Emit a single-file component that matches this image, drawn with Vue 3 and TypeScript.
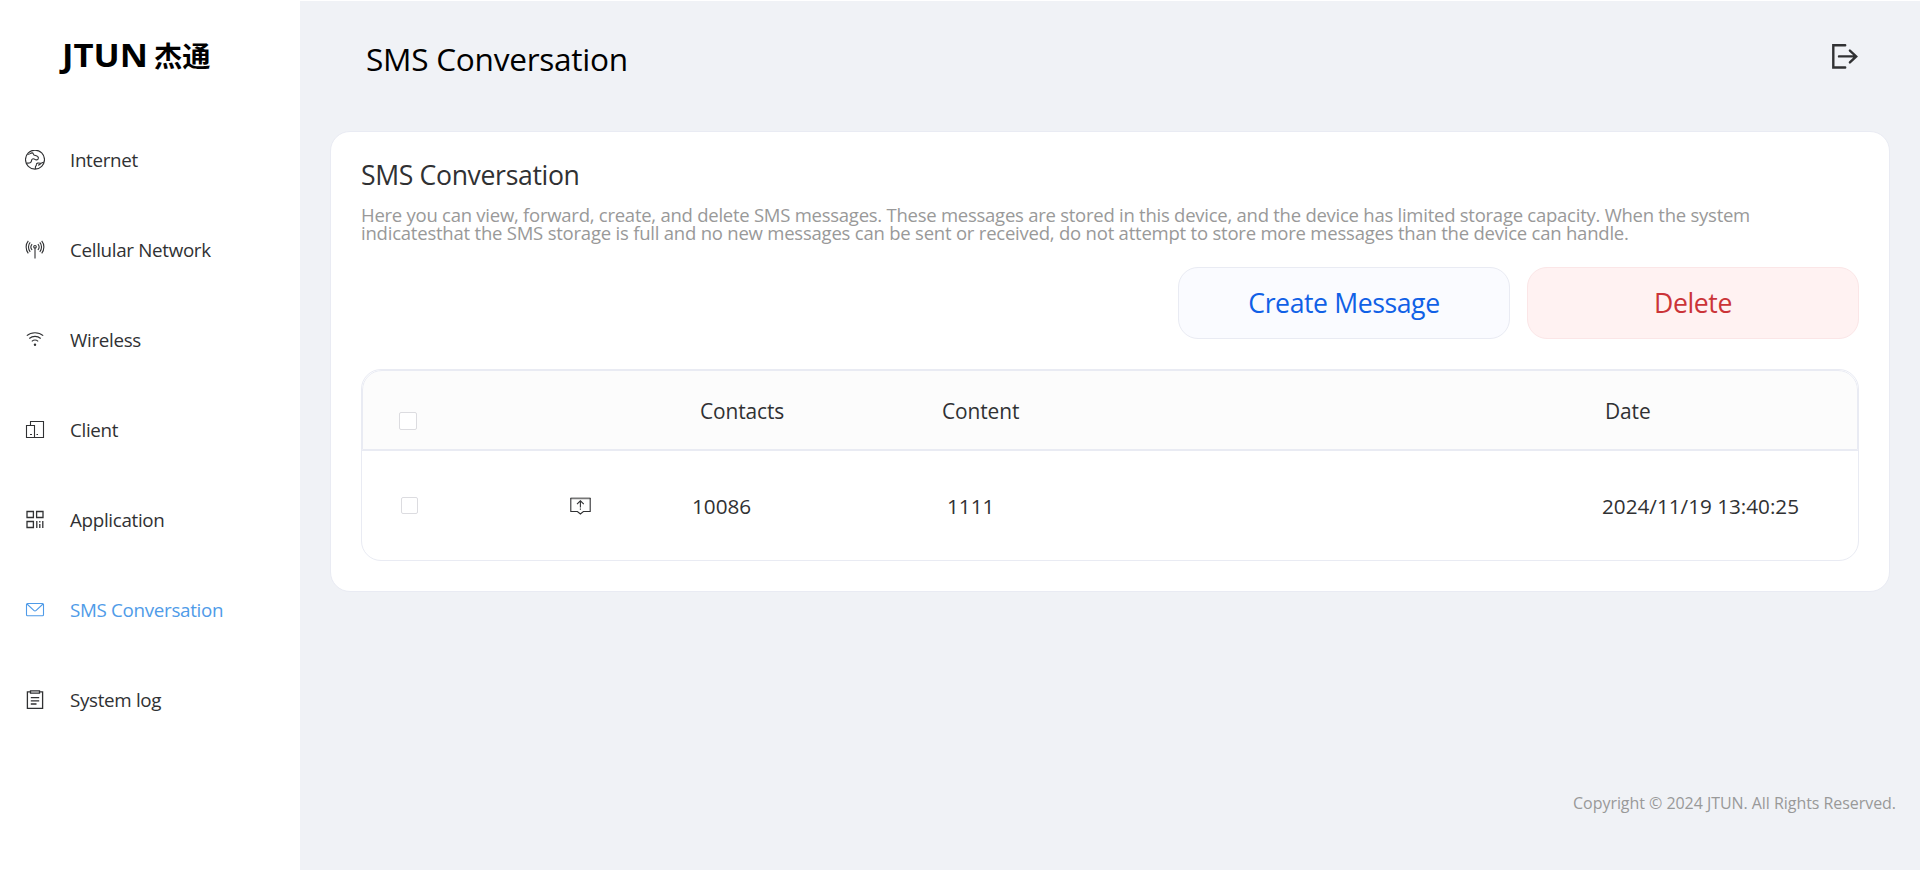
<script setup lang="ts">
import { ref } from 'vue'

type IconName = 'globe' | 'antenna' | 'wifi' | 'client' | 'apps' | 'mail' | 'log'

interface NavItem {
  label: string
  icon: IconName
}

interface SmsMessage {
  contact: string
  content: string
  date: string
  selected: boolean
}

const navItems: NavItem[] = [
  { label: 'Internet', icon: 'globe' },
  { label: 'Cellular Network', icon: 'antenna' },
  { label: 'Wireless', icon: 'wifi' },
  { label: 'Client', icon: 'client' },
  { label: 'Application', icon: 'apps' },
  { label: 'SMS Conversation', icon: 'mail' },
  { label: 'System log', icon: 'log' },
]

const active = ref('SMS Conversation')
const allSelected = ref(false)
const messages = ref<SmsMessage[]>([
  { contact: '10086', content: '1111', date: '2024/11/19 13:40:25', selected: false },
])

function toggleAll(): void {
  messages.value.forEach((m) => (m.selected = allSelected.value))
}
</script>

<template>
  <div class="layout">
    <aside class="sidebar">
      <svg class="logo" viewBox="0 0 152 34" width="152" height="34">
        <text class="logo-latin" x="2" y="27.4" textLength="86" lengthAdjust="spacingAndGlyphs">JTUN</text>
        <text class="logo-cjk" x="94" y="26.5" textLength="56.5" lengthAdjust="spacingAndGlyphs">杰通</text>
      </svg>
      <nav class="nav">
        <a
          v-for="item in navItems"
          :key="item.label"
          class="nav-item"
          :class="{ active: item.label === active }"
          @click="active = item.label"
        >
          <svg class="nav-icon" viewBox="0 0 20 20" width="20" height="20">
            <g v-if="item.icon === 'globe'">
              <circle cx="10" cy="9.6" r="9.5" />
              <path d="M3 4.2C4.6 4.6 5.4 3 7 2.9C8.6 2.8 8 4.2 9 5C10.4 5.8 13.4 5.8 13.4 8C13.2 10.4 10.8 10.2 9.6 9.2C8.2 8.4 6.6 8.8 6.6 10.4C6.4 13 4.6 13.4 1.2 13" />
              <path d="M19 12.2C17.4 12 17 13.4 15.6 13.4C13.4 12.8 11.2 13 11.4 14.4C11.8 15.6 10.4 15.8 10.4 17V19M15.6 13.4C15.4 14.8 14.2 15 13 15.2" />
            </g>
            <g v-else-if="item.icon === 'antenna'">
              <path d="M10 8.2V18.4" />
              <circle cx="10" cy="6.8" r="1.3" />
              <path d="M7.1 4.2C5.7 5.8 5.7 8.4 7.1 10M12.9 4.2C14.3 5.8 14.3 8.4 12.9 10M5.2 2.4C2.9 5 2.9 9.2 5.2 11.8M14.8 2.4C17.1 5 17.1 9.2 14.8 11.8M3.3 .9C.4 4.4 .4 9.8 3.3 13.3M16.7 .9C19.6 4.4 19.6 9.8 16.7 13.3" />
            </g>
            <g v-else-if="item.icon === 'wifi'">
              <path d="M1.8 5.7C6.4 1.7 13.6 1.7 18.2 5.7M4.3 8.5C7.6 5.7 12.4 5.7 15.7 8.5M6.8 11.4C8.7 9.8 11.3 9.8 13.2 11.4" />
              <circle class="solid" cx="10" cy="14.8" r="1.2" />
            </g>
            <g v-else-if="item.icon === 'client'">
              <path d="M5.5 5.5V1.5H18.5V17.5H10" />
              <path d="M1.5 5.5H9.5V17.5H1.5Z" />
              <path d="M5 14.5H7M11.5 14.5H13" />
            </g>
            <g v-else-if="item.icon === 'apps'">
              <path class="bold" d="M2 1.5H8.4V7.5H2ZM11.6 1.5H18V7.5H11.6ZM2 11.5H8.4V17.5H2ZM11.8 11V18M14.8 11V12.5M14.8 14V18M17.8 11V18" />
            </g>
            <g v-else-if="item.icon === 'mail'">
              <rect x="1.5" y="3.5" width="17" height="12.2" rx="1" />
              <path d="M2 4L8.8 10.4Q10 11.4 11.2 10.4L18 4" />
            </g>
            <g v-else>
              <path class="bold" d="M5 1.8H2.4V18.4H17.6V1.8H15M5.5 .8H14.5V3.2H5.5Z" />
              <path class="bold" d="M5.8 7.6H14.2M5.8 10.8H14.2M5.8 14H11.5" />
            </g>
          </svg>
          <span class="nav-label">{{ item.label }}</span>
        </a>
      </nav>
    </aside>

    <main class="main">
      <header class="topbar">
        <h1 class="page-title">SMS Conversation</h1>
        <svg class="logout" viewBox="0 0 28 28" width="28" height="28">
          <path d="M14.2 2.3H2.3V24.5H14.2M8 13.4H25.2M18.9 7.6L25.2 13.4L18.9 19.4" />
        </svg>
      </header>

      <section class="card">
        <h2 class="card-title">SMS Conversation</h2>
        <p class="desc">
          <span class="desc-line first">Here you can view, forward, create, and delete SMS messages. These messages are stored in this device, and the device has limited storage capacity. When the system</span>
          <span class="desc-line">indicatesthat the SMS storage is full and no new messages can be sent or received, do not attempt to store more messages than the device can handle.</span>
        </p>

        <div class="actions">
          <button class="btn create" type="button">Create Message</button>
          <button class="btn delete" type="button">Delete</button>
        </div>

        <div class="table">
          <div class="table-head">
            <div><input v-model="allSelected" class="check" type="checkbox" @change="toggleAll" /></div>
            <div>Contacts</div>
            <div>Content</div>
            <div>Date</div>
          </div>
          <div v-for="m in messages" :key="m.date" class="table-row">
            <div><input v-model="m.selected" class="check" type="checkbox" /></div>
            <svg class="forward" viewBox="0 0 21 18" width="21" height="18">
              <path class="frame-top" d="M.5 1.3H20.5" />
              <path d="M.8 1V14.5H7.4L10.4 17L13.4 14.5H20.2V1" />
              <path d="M10.4 3.8V10.4M7 7.2L10.4 3.8L13.8 7.2M10.4 11.6V12.8" />
            </svg>
            <div>{{ m.contact }}</div>
            <div class="content">{{ m.content }}</div>
            <div>{{ m.date }}</div>
          </div>
        </div>
      </section>

      <footer class="copyright">Copyright © 2024 JTUN. All Rights Reserved.</footer>
    </main>
  </div>
</template>

<style>
body {
  margin: 0;
  background: #fff;
}
</style>

<style scoped>
.layout {
  display: flex;
  height: 870px;
  overflow: hidden;
  font-family: 'Open Sans', 'Noto Sans', 'Noto Sans CJK SC', sans-serif;
  color: #303133;
}

.layout * {
  box-sizing: border-box;
}

.sidebar {
  flex: 0 0 300px;
  background: #fff;
}

.logo {
  display: block;
  margin: 40px 0 0 60px;
  overflow: visible;
}

.logo-latin {
  font: 700 33px 'Open Sans', sans-serif;
  fill: #000;
}

.logo-cjk {
  font: 700 28px 'Noto Sans CJK SC', sans-serif;
  fill: #000;
}

.nav {
  margin-top: 41px;
}

.nav-item {
  display: flex;
  align-items: center;
  gap: 25px;
  height: 90px;
  padding-left: 25px;
  font-size: 18.8px;
  letter-spacing: -0.32px;
  cursor: pointer;
}

.nav-label {
  line-height: 26px;
}

.nav-item.active {
  color: #4f9be8;
}

.nav-icon {
  fill: none;
  stroke: currentColor;
  stroke-width: 1.1;
}

.nav-icon .bold {
  stroke-width: 1.3;
}

.nav-icon .solid {
  fill: currentColor;
  stroke: none;
}

.main {
  flex: 1;
  display: flex;
  flex-direction: column;
  border-top: 1px solid #fff;
  background: #f0f2f6;
}

.topbar {
  display: flex;
  justify-content: space-between;
  height: 130px;
  padding: 36px 61px 0 66px;
}

.page-title {
  margin: 0;
  font-size: 31.6px;
  font-weight: 400;
  line-height: 44px;
  letter-spacing: -0.27px;
  color: #000;
}

.logout {
  margin-top: 6px;
  fill: none;
  stroke: #303133;
  stroke-width: 2.4;
  stroke-linecap: round;
}

.card {
  height: 461px;
  margin: 0 30px;
  padding: 25px 30px 0;
  border: 1px solid #e9ebf3;
  border-radius: 20px;
  background: #fff;
}

.card-title {
  margin: 0;
  font-size: 26.6px;
  font-weight: 400;
  line-height: 36px;
  letter-spacing: -0.35px;
}

.desc {
  margin: 13px 0 0;
  font-size: 18.5px;
  line-height: 18.3px;
  color: #999;
}

.desc-line {
  display: block;
  white-space: nowrap;
  letter-spacing: -0.218px;
}

.desc-line.first {
  letter-spacing: -0.252px;
}

.actions {
  display: flex;
  justify-content: flex-end;
  gap: 17px;
  margin-top: 24px;
}

.btn {
  width: 332px;
  height: 72px;
  padding: 0;
  border: 1px solid;
  border-radius: 20px;
  font-family: inherit;
  font-size: 26.6px;
  letter-spacing: -0.4px;
  cursor: pointer;
}

.btn.create {
  border-color: #e9ebf3;
  background: #fafbff;
  color: #1060e6;
}

.btn.delete {
  border-color: #fbe6e7;
  background: #fff2f2;
  color: #cb3438;
}

.table {
  height: 192px;
  margin-top: 30px;
  border: 1px solid #e9ebf3;
  border-radius: 20px;
  overflow: hidden;
  font-size: 20.9px;
}

.table-head,
.table-row {
  display: grid;
  align-items: center;
}

.table-head {
  grid-template-columns: 337px 242px 663px 1fr;
  height: 80px;
  padding-top: 3px;
  border: 1px solid #e9ebf3;
  border-radius: 20px 20px 0 0;
  background: #fcfcfc;
  letter-spacing: -0.1px;
}

.table-row {
  grid-template-columns: 208px 122px 254px 656px 1fr;
  height: 110px;
  padding-top: 1px;
  border-top: 1px solid #e9ebf3;
  font-size: 20.7px;
}

.content {
  padding-left: 1px;
}

.check {
  display: block;
  appearance: none;
  border: 1px solid #dcdce0;
  border-radius: 2px;
  background: #fff;
}

.check:checked {
  background: #1060e6;
}

.table-head .check {
  width: 18px;
  height: 18px;
  margin: 20px 0 0 36px;
}

.table-row .check {
  width: 17px;
  height: 17px;
  margin: 0 0 1px 39px;
}

.forward {
  margin-top: 1px;
  fill: none;
  stroke: #303133;
  stroke-width: 1.1;
}

.forward .frame-top {
  stroke: #777;
  stroke-width: 1.8;
}

.copyright {
  margin-top: 200px;
  padding-right: 24px;
  font-size: 16px;
  line-height: 22px;
  letter-spacing: -0.05px;
  text-align: right;
  color: #999;
}
</style>
